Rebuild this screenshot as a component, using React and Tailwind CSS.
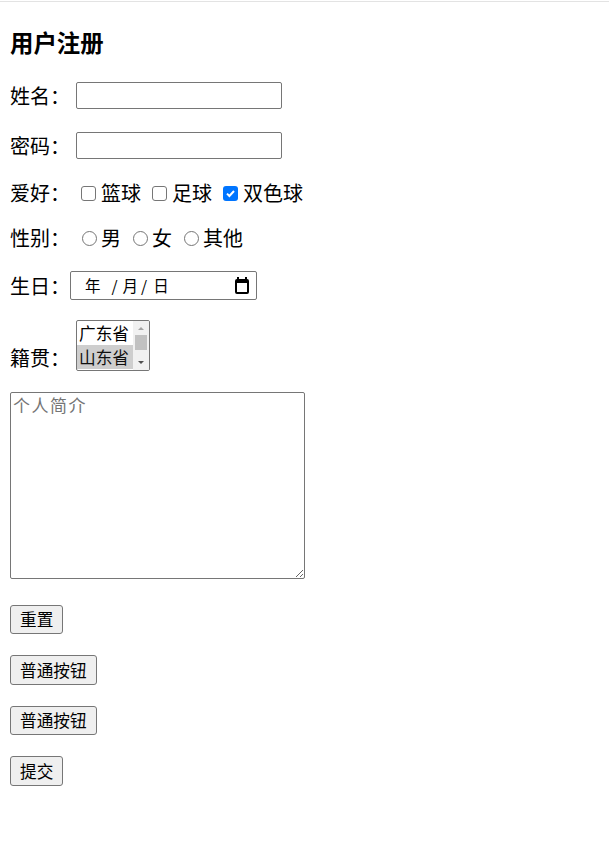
import { useState } from 'react'

const cjk = '"Noto Sans CJK SC", "Noto Sans", sans-serif'

function Box({ checked }) {
  return checked ? (
    <span className="block w-[15px] h-[15px] rounded-[3px] bg-[#0075ff] flex items-center justify-center shrink-0">
      <svg width="11" height="11" viewBox="0 0 11 11">
        <path d="M2 5.6 L4.4 8 L9 3" fill="none" stroke="#fff" strokeWidth="2" />
      </svg>
    </span>
  ) : (
    <span className="block w-[15px] h-[15px] rounded-[3px] border border-[#767676] bg-white shrink-0" />
  )
}

function Radio() {
  return <span className="block w-[15px] h-[15px] rounded-full border border-[#767676] bg-white shrink-0" />
}

function Label({ children }) {
  return <span className="w-[60px] shrink-0 leading-[26px]">{children}</span>
}

function CalendarIcon() {
  return (
    <svg width="16" height="17" viewBox="0 0 16 17">
      <rect x="3" y="0" width="2" height="3" fill="#000" />
      <rect x="11" y="0" width="2" height="3" fill="#000" />
      <path d="M3 2 H13 A2 2 0 0 1 15 4 V15 A2 2 0 0 1 13 17 H3 A2 2 0 0 1 1 15 V4 A2 2 0 0 1 3 2 Z M3 6 V15 H13 V6 Z" fill="#000" fillRule="evenodd" />
    </svg>
  )
}

export default function App() {
  const [hobbies] = useState({ basketball: false, football: false, lottery: true })

  return (
    <div className="min-h-screen bg-white text-black text-[20px]" style={{ fontFamily: cjk }}>
      <div className="mt-px h-px bg-[#e3e3e3]" />
      <form className="px-[10px] flex flex-col items-start pb-10">
        <h3 className="mt-[25px] h-[30px] leading-[30px] text-[23.4px] font-bold">用户注册</h3>

        {/* 姓名 */}
        <div className="mt-[25px] h-[27px] flex items-center">
          <Label>姓名：</Label>
          <input type="text" className="ml-[6px] w-[206px] h-[27px] border border-[#767676] rounded-[2px] bg-white px-1 outline-none" />
        </div>

        {/* 密码 */}
        <div className="mt-[23px] h-[27px] flex items-center">
          <Label>密码：</Label>
          <input type="password" className="ml-[6px] w-[206px] h-[27px] border border-[#767676] rounded-[2px] bg-white px-1 outline-none" />
        </div>

        {/* 爱好 */}
        <div className="mt-[21px] h-[26px] flex items-center">
          <Label>爱好：</Label>
          <div className="ml-[11px] flex items-center">
            <Box checked={hobbies.basketball} />
            <span className="ml-[5px] leading-[26px]">篮球</span>
            <span className="ml-[11px] flex"><Box checked={hobbies.football} /></span>
            <span className="ml-[5px] leading-[26px]">足球</span>
            <span className="ml-[11px] flex"><Box checked={hobbies.lottery} /></span>
            <span className="ml-[5px] leading-[26px]">双色球</span>
          </div>
        </div>

        {/* 性别 */}
        <div className="mt-[19px] h-[26px] flex items-center">
          <Label>性别：</Label>
          <div className="ml-[12px] flex items-center">
            <Radio />
            <span className="ml-[4px] leading-[26px]">男</span>
            <span className="ml-[12px] flex"><Radio /></span>
            <span className="ml-[4px] leading-[26px]">女</span>
            <span className="ml-[12px] flex"><Radio /></span>
            <span className="ml-[4px] leading-[26px]">其他</span>
          </div>
        </div>

        {/* 生日 */}
        <div className="mt-[20px] h-[29px] flex items-center">
          <Label>生日：</Label>
          <div className="w-[187px] h-[29px] border border-[#767676] rounded-[2px] bg-white flex items-center text-[15.5px] pl-[14px] pr-[6px]">
            <span>年</span>
            <span className="ml-[11px]">/</span>
            <span className="ml-[5px]">月</span>
            <span className="ml-[3px]">/</span>
            <span className="ml-[6px]">日</span>
            <span className="ml-auto flex"><CalendarIcon /></span>
          </div>
        </div>

        {/* 籍贯 */}
        <div className="mt-[21px] h-[50px] flex items-end">
          <Label>籍贯：</Label>
          <div className="ml-[6px] w-[74px] h-[51px] border border-[#767676] rounded-[2px] bg-white flex overflow-hidden">
            <div className="flex-1 flex flex-col text-[16.67px]">
              <div className="h-[24px] leading-[24px] pl-[2px]">广东省</div>
              <div className="h-[24px] leading-[24px] pl-[2px] bg-[#cecece] text-[#101010]">山东省</div>
            </div>
            <div className="w-[16px] bg-[#f1f1f1] flex flex-col items-center">
              <svg width="8" height="14" viewBox="0 0 8 14"><path d="M1 9 L4 6 L7 9 Z" fill="#a3a3a3" /></svg>
              <div className="w-[12px] h-[15px] bg-[#c1c1c1]" />
              <div className="flex-1" />
              <svg width="8" height="12" viewBox="0 0 8 12"><path d="M1 3 L4 6 L7 3 Z" fill="#505050" /></svg>
            </div>
          </div>
        </div>

        {/* 个人简介 */}
        <textarea
          placeholder="个人简介"
          className="mt-[21px] w-[295px] h-[187px] border border-[#767676] rounded-[2px] px-[2px] py-0 text-[17px] tracking-[1.5px] leading-[24px] placeholder:text-[#757575] outline-none"
          style={{ fontFamily: cjk }}
        />

        <button type="reset" className="mt-[26px] h-[29px] px-[9px] border border-[#767676] rounded-[3px] bg-[#efefef] text-[16.67px] leading-none">重置</button>
        <button type="button" className="mt-[21px] h-[30px] px-[9px] border border-[#767676] rounded-[3px] bg-[#efefef] text-[16.67px] leading-none">普通按钮</button>
        <button type="button" className="mt-[21px] h-[29px] px-[9px] border border-[#767676] rounded-[3px] bg-[#efefef] text-[16.67px] leading-none">普通按钮</button>
        <button type="submit" className="mt-[21px] h-[30px] px-[9px] border border-[#767676] rounded-[3px] bg-[#efefef] text-[16.67px] leading-none">提交</button>
      </form>
    </div>
  )
}
